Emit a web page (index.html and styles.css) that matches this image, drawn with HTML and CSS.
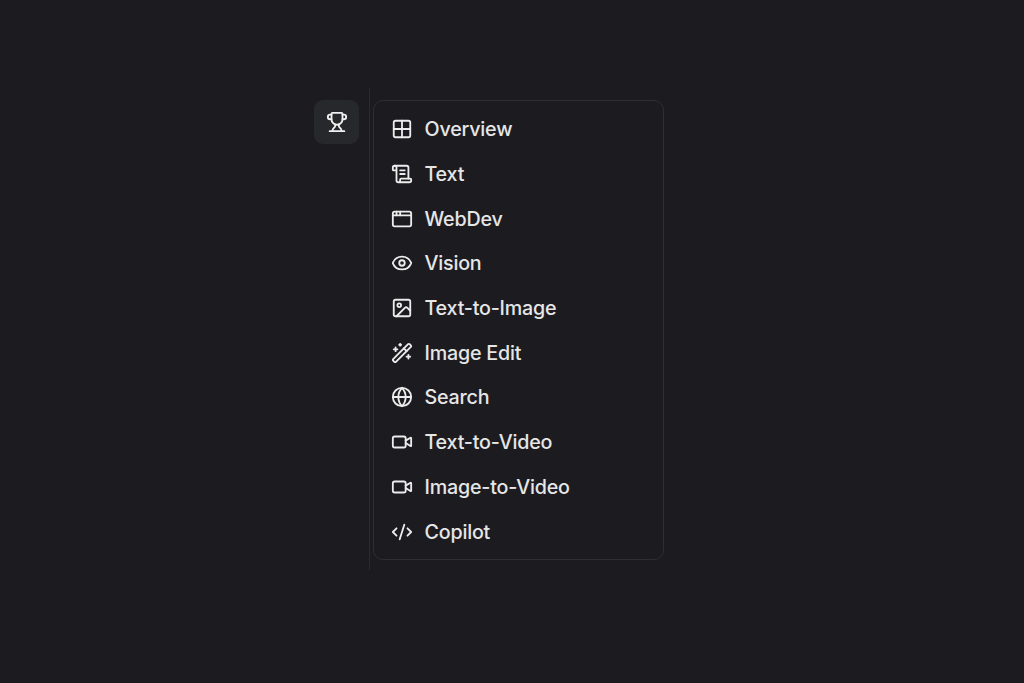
FILE: index.html
```html
<!DOCTYPE html>
<html lang="en">
<head>
<meta charset="utf-8">
<title>Leaderboard menu</title>
<link rel="stylesheet" href="styles.css">
</head>
<body>
<div class="shell">
  <div class="trigger">
    <svg class="trophy" viewBox="0 0 24 24"><path d="M10 14.66v1.626a2 2 0 0 1-.976 1.696A5 5 0 0 0 7 21.978"/><path d="M14 14.66v1.626a2 2 0 0 0 .976 1.696A5 5 0 0 1 17 21.978"/><path d="M18 9h1.5a1 1 0 0 0 0-5H18"/><path d="M4 22h16"/><path d="M6 9a6 6 0 0 0 12 0V3a1 1 0 0 0-1-1H7a1 1 0 0 0-1 1z"/><path d="M6 9H4.5a1 1 0 0 1 0-5H6"/></svg>
  </div>
  <div class="rail"></div>
  <ul class="panel">
    <li class="item"><svg class="icon" viewBox="0 0 24 24"><rect x="3" y="3" width="18" height="18" rx="2"/><path d="M3 12h18"/><path d="M12 3v18"/></svg><span>Overview</span></li>
    <li class="item"><svg class="icon" viewBox="0 0 24 24"><path d="M15 12h-5"/><path d="M15 8h-5"/><path d="M19 17V5a2 2 0 0 0-2-2H4"/><path d="M8 21h12a2 2 0 0 0 2-2v-1a1 1 0 0 0-1-1H11a1 1 0 0 0-1 1v1a2 2 0 1 1-4 0V5a2 2 0 1 0-4 0v2a1 1 0 0 0 1 1h3"/></svg><span>Text</span></li>
    <li class="item"><svg class="icon" viewBox="0 0 24 24"><rect x="2" y="4" width="20" height="16" rx="2"/><path d="M10 4v4"/><path d="M2 8h20"/><path d="M6 4v4"/></svg><span>WebDev</span></li>
    <li class="item"><svg class="icon" viewBox="0 0 24 24"><path d="M2.062 12.348a1 1 0 0 1 0-.696 10.75 10.75 0 0 1 19.876 0 1 1 0 0 1 0 .696 10.75 10.75 0 0 1-19.876 0"/><circle cx="12" cy="12" r="3"/></svg><span>Vision</span></li>
    <li class="item"><svg class="icon" viewBox="0 0 24 24"><rect x="3" y="3" width="18" height="18" rx="2"/><circle cx="9" cy="9" r="2"/><path d="m21 15-3.086-3.086a2 2 0 0 0-2.828 0L6 21"/></svg><span>Text-to-Image</span></li>
    <li class="item"><svg class="icon" viewBox="0 0 24 24"><path d="m21.64 3.64-1.28-1.28a1.21 1.21 0 0 0-1.72 0L2.36 18.64a1.21 1.21 0 0 0 0 1.72l1.28 1.28a1.2 1.2 0 0 0 1.72 0L21.64 5.36a1.2 1.2 0 0 0 0-1.72"/><path d="m14 7 3 3"/><path d="M5 6v4"/><path d="M19 14v4"/><path d="M10 2v2"/><path d="M7 8H3"/><path d="M21 16h-4"/><path d="M11 3H9"/></svg><span>Image Edit</span></li>
    <li class="item"><svg class="icon" viewBox="0 0 24 24"><circle cx="12" cy="12" r="10"/><path d="M12 2a14.5 14.5 0 0 0 0 20 14.5 14.5 0 0 0 0-20"/><path d="M2 12h20"/></svg><span>Search</span></li>
    <li class="item"><svg class="icon" viewBox="0 0 24 24"><path d="m16 13 5.223 3.482a.5.5 0 0 0 .777-.416V7.87a.5.5 0 0 0-.752-.432L16 10.5"/><rect x="2" y="6" width="14" height="12" rx="2"/></svg><span>Text-to-Video</span></li>
    <li class="item"><svg class="icon" viewBox="0 0 24 24"><path d="m16 13 5.223 3.482a.5.5 0 0 0 .777-.416V7.87a.5.5 0 0 0-.752-.432L16 10.5"/><rect x="2" y="6" width="14" height="12" rx="2"/></svg><span>Image-to-Video</span></li>
    <li class="item"><svg class="icon" viewBox="0 0 24 24"><path d="m18 16 4-4-4-4"/><path d="m6 8-4 4 4 4"/><path d="m14.5 4-5 16"/></svg><span>Copilot</span></li>
  </ul>
</div>
</body>
</html>
```

FILE: styles.css
```css
* { box-sizing: border-box; }
html, body { height: 100%; }
body {
  margin: 0;
  background: #1c1c20;
  font-family: Inter, "Liberation Sans", sans-serif;
  overflow: hidden;
}
.shell {
  display: flex;
  align-items: flex-start;
  padding: 88px 0 0 314px;
}
.trigger {
  width: 45px;
  height: 44px;
  margin-top: 12px;
  display: flex;
  align-items: center;
  justify-content: center;
  background: #27282b;
  border-radius: 9px;
}
.trophy {
  width: 22px;
  height: 22px;
  fill: none;
  stroke: #f0f0f0;
  stroke-width: 2;
  stroke-linecap: round;
  stroke-linejoin: round;
}
.rail {
  width: 1px;
  height: 482px;
  margin-left: 10px;
  background: #2a2b2e;
}
.panel {
  list-style: none;
  width: 291px;
  height: 460px;
  margin: 12px 0 0 3px;
  padding: 6px 0 0;
  display: flex;
  flex-direction: column;
  border: 1px solid #2e2f32;
  border-radius: 10px;
  background: #1c1c20;
}
.item {
  display: flex;
  align-items: center;
  gap: 11.5px;
  flex: none;
  height: 44.7px;
  padding-left: 17px;
  color: #e6e6e7;
  font-size: 19.7px;
  font-weight: 500;
  letter-spacing: -0.2px;
}
.icon {
  flex: none;
  width: 22px;
  height: 22px;
  fill: none;
  stroke: #ececec;
  stroke-width: 2;
  stroke-linecap: round;
  stroke-linejoin: round;
}
```
